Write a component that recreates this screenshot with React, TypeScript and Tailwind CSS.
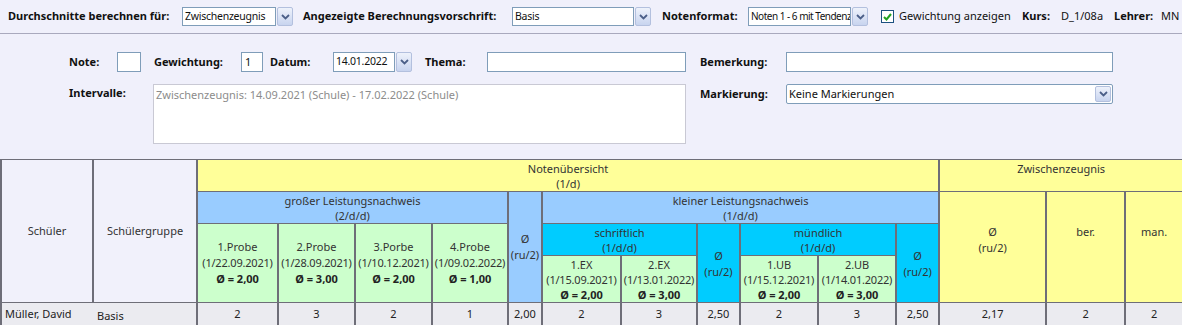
const Chevron = () => (
  <svg width="9" height="6" viewBox="0 0 9 6">
    <path d="M1 1l3.5 3.5L8 1" fill="none" stroke="#4b5f88" strokeWidth="1.8" />
  </svg>
)

const DropButton = ({ className = "" }: { className?: string }) => (
  <div
    className={`flex w-[16px] shrink-0 items-center justify-center rounded-[2px] border border-[#b3c0de] bg-linear-to-b from-[#eef2fb] to-[#c8d4ef] ${className}`}
  >
    <Chevron />
  </div>
)

const Select = ({
  value,
  className,
  textClass = "text-[10.5px] tracking-[-0.25px]",
}: {
  value: string
  className: string
  textClass?: string
}) => (
  <div className={`flex h-[19px] ${className}`}>
    <div
      className={`flex min-w-0 flex-1 items-center overflow-hidden whitespace-nowrap border border-[#7f9db9] bg-white pl-[2px] text-[#111] ${textClass}`}
    >
      {value}
    </div>
    <DropButton className="ml-px" />
  </div>
)

const Label = ({ text, className }: { text: string; className: string }) => (
  <span className={`shrink-0 whitespace-nowrap font-bold text-[#111] ${className}`}>{text}</span>
)

const TopBar = () => (
  <div className="flex h-[34px] items-center border-b border-[#a9a9bd] pl-[8px]">
    <Label text="Durchschnitte berechnen für:" className="w-[174px]" />
    <Select value="Zwischenzeugnis" className="w-[111px]" />
    <Label text="Angezeigte Berechnungsvorschrift:" className="ml-[10px] w-[209px]" />
    <Select value="Basis" className="w-[139px]" />
    <Label text="Notenformat:" className="ml-[11px] w-[86px]" />
    <Select
      value="Noten 1 - 6 mit Tendenz"
      className="w-[120px]"
      textClass="text-[10px] tracking-[-0.5px]"
    />
    <div className="ml-[13px] flex h-[13px] w-[13px] items-center justify-center border border-[#1c5180] bg-white">
      <svg width="9" height="8" viewBox="0 0 9 8">
        <path d="M1 4l2.5 2.5L8 1" fill="none" stroke="#21a121" strokeWidth="2" />
      </svg>
    </div>
    <span className="ml-[5px] w-[123px] whitespace-nowrap text-[#111]">Gewichtung anzeigen</span>
    <Label text="Kurs:" className="w-[39px]" />
    <span className="w-[53px] whitespace-nowrap text-[#111]">D_1/08a</span>
    <Label text="Lehrer:" className="w-[47px]" />
    <span className="whitespace-nowrap text-[#111]">MN</span>
  </div>
)

const Input = ({ value = "", className }: { value?: string; className: string }) => (
  <div className={`flex h-[20px] shrink-0 items-center border border-[#7f9db9] bg-white pl-[3px] text-[#111] ${className}`}>
    {value}
  </div>
)

const FormArea = () => (
  <div className="flex h-[125px] flex-col gap-[12px] pl-[69px] pt-[18px]">
    <div className="flex h-[20px] items-center">
      <Label text="Note:" className="w-[48px]" />
      <Input className="w-[24px]" />
      <Label text="Gewichtung:" className="ml-[13px] w-[87px]" />
      <Input value="1" className="w-[22px]" />
      <Label text="Datum:" className="ml-[7px] w-[63px]" />
      <Select value="14.01.2022" className="h-[20px] w-[79px]" />
      <Label text="Thema:" className="ml-[13px] w-[62px]" />
      <Input className="w-[199px]" />
      <Label text="Bemerkung:" className="ml-[14px] w-[86px]" />
      <Input className="w-[327px]" />
    </div>
    <div className="flex items-start">
      <Label text="Intervalle:" className="w-[84px] pt-[1px]" />
      <div className="h-[60px] w-[533px] shrink-0 border border-[#c9c9d4] bg-white pl-[2px] pt-[2px] text-[#8c8c8c]">
        Zwischenzeugnis: 14.09.2021 (Schule) - 17.02.2022 (Schule)
      </div>
      <Label text="Markierung:" className="ml-[14px] flex h-[20px] w-[86px] items-center" />
      <div className="flex h-[20px] w-[327px] items-center rounded-[2px] border border-[#7f9db9] bg-white pl-[2px] pr-px text-[#111]">
        <span className="flex-1">Keine Markierungen</span>
        <DropButton className="h-[16px]" />
      </div>
    </div>
  </div>
)

const cell = "border-x-2 border-y border-[#6e6e78] p-0 font-normal text-[#333] align-middle"

const Probe = ({
  title,
  date,
  avg,
  rowSpan = 1,
  lead,
}: {
  title: string
  date: string
  avg: string
  rowSpan?: number
  lead: string
}) => (
  <th rowSpan={rowSpan} className={`${cell} bg-[#ccffcc] ${lead}`}>
    <div>{title}</div>
    <div className="whitespace-nowrap tracking-[-0.2px]">{date}</div>
    <div className="font-bold text-[#222]">Ø = {avg}</div>
  </th>
)

const Avg = () => (
  <>
    <div>Ø</div>
    <div>(ru/2)</div>
  </>
)

const TwoLine = ({ top, bottom }: { top: string; bottom: string }) => (
  <>
    <div className="leading-[15px]">{top}</div>
    <div className="leading-[15px]">{bottom}</div>
  </>
)

const GradeTable = () => {
  const widths = [92, 104, 81, 77, 77, 76, 34, 79, 76, 43, 78, 78, 43, 107, 79, 58]
  const values = ["2", "3", "2", "1", "2,00", "2", "3", "2,50", "2", "3", "2,50", "2,17", "2", "2"]

  return (
    <table className="w-[1182px] table-fixed border-collapse text-[11px] leading-[16px]">
      <colgroup>
        {widths.map((w, i) => (
          <col key={i} style={{ width: w }} />
        ))}
      </colgroup>
      <thead>
        <tr className="h-[32px]">
          <th rowSpan={4} className={`${cell} bg-[#f1f1fb]`}>Schüler</th>
          <th rowSpan={4} className={`${cell} bg-[#f1f1fb]`}>Schülergruppe</th>
          <th colSpan={11} className={`${cell} bg-[#ffff99]`}>
            <TwoLine top="Notenübersicht" bottom="(1/d)" />
          </th>
          <th colSpan={3} className={`${cell} bg-[#ffff99] !align-top pt-[1px]`}>Zwischenzeugnis</th>
        </tr>
        <tr className="h-[32px]">
          <th colSpan={4} className={`${cell} bg-[#99ccff]`}>
            <TwoLine top="großer Leistungsnachweis" bottom="(2/d/d)" />
          </th>
          <th rowSpan={3} className={`${cell} bg-[#99ccff]`}>
            <Avg />
          </th>
          <th colSpan={6} className={`${cell} bg-[#99ccff]`}>
            <TwoLine top="kleiner Leistungsnachweis" bottom="(1/d/d)" />
          </th>
          <th rowSpan={3} className={`${cell} bg-[#ffff99] pb-[14px]`}>
            <Avg />
          </th>
          <th rowSpan={3} className={`${cell} bg-[#ffff99] pb-[30px]`}>ber.</th>
          <th rowSpan={3} className={`${cell} bg-[#ffff99] pb-[30px]`}>man.</th>
        </tr>
        <tr className="h-[32px]">
          <Probe title="1.Probe" date="(1/22.09.2021)" avg="2,00" rowSpan={2} lead="leading-[16px]" />
          <Probe title="2.Probe" date="(1/28.09.2021)" avg="3,00" rowSpan={2} lead="leading-[16px]" />
          <Probe title="3.Porbe" date="(1/10.12.2021)" avg="2,00" rowSpan={2} lead="leading-[16px]" />
          <Probe title="4.Probe" date="(1/09.02.2022)" avg="1,00" rowSpan={2} lead="leading-[16px]" />
          <th colSpan={2} className={`${cell} bg-[#00ccff]`}>
            <TwoLine top="schriftlich" bottom="(1/d/d)" />
          </th>
          <th rowSpan={2} className={`${cell} bg-[#00ccff] pt-[2px]`}>
            <Avg />
          </th>
          <th colSpan={2} className={`${cell} bg-[#00ccff]`}>
            <TwoLine top="mündlich" bottom="(1/d/d)" />
          </th>
          <th rowSpan={2} className={`${cell} bg-[#00ccff] pt-[2px]`}>
            <Avg />
          </th>
        </tr>
        <tr className="h-[47px]">
          <Probe title="1.EX" date="(1/15.09.2021)" avg="2,00" lead="leading-[15px]" />
          <Probe title="2.EX" date="(1/13.01.2022)" avg="3,00" lead="leading-[15px]" />
          <Probe title="1.UB" date="(1/15.12.2021)" avg="2,00" lead="leading-[15px]" />
          <Probe title="2.UB" date="(1/14.01.2022)" avg="3,00" lead="leading-[15px]" />
        </tr>
      </thead>
      <tbody>
        <tr className="h-[23px] bg-[#ebebf0] text-[#222]">
          <td className="whitespace-nowrap border-y border-l-2 border-[#6e6e78] p-0 pl-[3px]">Müller, David</td>
          <td className="border-y border-r-2 border-[#6e6e78] p-0 pl-[4px] pt-[3px]">Basis</td>
          {values.map((v, i) => (
            <td key={i} className="border-x-2 border-y border-[#6e6e78] p-0 text-center">
              {v}
            </td>
          ))}
        </tr>
      </tbody>
    </table>
  )
}

export default function App() {
  return (
    <div className="h-[325px] w-[1182px] overflow-hidden bg-[#f0f0fb] font-['Noto_Sans',sans-serif] text-[11px]">
      <TopBar />
      <FormArea />
      <GradeTable />
    </div>
  )
}
